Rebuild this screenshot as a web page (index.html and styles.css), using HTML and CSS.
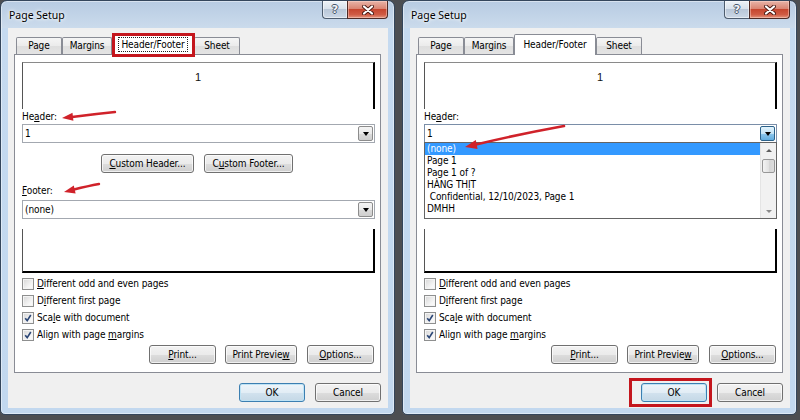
FILE: index.html
```html
<!DOCTYPE html>
<html>
<head>
<meta charset="utf-8">
<link rel="stylesheet" href="styles.css">
</head>
<body>
<div class="stage">
  <div class="dlg">
    <div class="titlebar">
      <span class="title">Page Setup</span>
      <div class="caps">
        <span class="cap help">?</span>
        <span class="cap close"><svg width="12" height="10" viewBox="0 0 12 10"><path d="M2 1.5L10 8.5M10 1.5L2 8.5" stroke="#4a1a14" stroke-width="4" stroke-linecap="round"/><path d="M2 1.5L10 8.5M10 1.5L2 8.5" stroke="#fff" stroke-width="2.2" stroke-linecap="round"/></svg></span>
      </div>
    </div>
    <div class="client">
      <div class="tabs">
        <span class="tab w-page">Page</span>
        <span class="tab w-margins">Margins</span>
        <span class="tab sel"><span class="focus">Header/Footer</span></span>
        <span class="tab w-sheet">Sheet</span>
      </div>
      <div class="panel">
        <div class="preview top">1</div>
        <div class="lbl lbl-h">He<u>a</u>der:</div>
        <div class="combo"><span class="val">1</span><span class="drop"><i class="tri"></i></span></div>
        <div class="btnrow center">
          <button class="btn w-ch"><u>C</u>ustom Header...</button>
          <button class="btn w-cf">C<u>u</u>stom Footer...</button>
        </div>
        <div class="lbl lbl-f"><u>F</u>ooter:</div>
        <div class="combo"><span class="val">(none)</span><span class="drop"><i class="tri"></i></span></div>
        <div class="preview bottom"></div>
        <div class="checks">
          <div class="chk"><span class="box"></span><span><u>D</u>ifferent odd and even pages</span></div>
          <div class="chk"><span class="box"></span><span>D<u>i</u>fferent first page</span></div>
          <div class="chk"><span class="box"><svg width="8" height="8" viewBox="0 0 8 8"><path d="M1.2 4.2L3.2 6.6L6.8 1" fill="none" stroke="#2b4676" stroke-width="1.6"/></svg></span><span>Sca<u>l</u>e with document</span></div>
          <div class="chk"><span class="box"><svg width="8" height="8" viewBox="0 0 8 8"><path d="M1.2 4.2L3.2 6.6L6.8 1" fill="none" stroke="#2b4676" stroke-width="1.6"/></svg></span><span>Align with page <u>m</u>argins</span></div>
        </div>
        <div class="btnrow end">
          <button class="btn w-pr"><u>P</u>rint...</button>
          <button class="btn w-pp">Print Previe<u>w</u></button>
          <button class="btn w-op"><u>O</u>ptions...</button>
        </div>
      </div>
      <div class="foot">
        <button class="btn w-ok def">OK</button>
        <button class="btn w-ok">Cancel</button>
      </div>
    </div>
  </div>

  <div class="dlg">
    <div class="titlebar">
      <span class="title">Page Setup</span>
      <div class="caps">
        <span class="cap help">?</span>
        <span class="cap close"><svg width="12" height="10" viewBox="0 0 12 10"><path d="M2 1.5L10 8.5M10 1.5L2 8.5" stroke="#4a1a14" stroke-width="4" stroke-linecap="round"/><path d="M2 1.5L10 8.5M10 1.5L2 8.5" stroke="#fff" stroke-width="2.2" stroke-linecap="round"/></svg></span>
      </div>
    </div>
    <div class="client">
      <div class="tabs">
        <span class="tab w-page">Page</span>
        <span class="tab w-margins">Margins</span>
        <span class="tab sel"><span class="nofocus">Header/Footer</span></span>
        <span class="tab w-sheet">Sheet</span>
      </div>
      <div class="panel">
        <div class="preview top">1</div>
        <div class="lbl lbl-h">He<u>a</u>der:</div>
        <div class="combo open"><span class="val">1</span><span class="drop hot"><i class="tri"></i></span>
          <div class="list">
            <div class="items">
              <div class="item sel">(none)</div>
              <div class="item">Page 1</div>
              <div class="item">Page 1 of ?</div>
              <div class="item">HÀNG THỊT</div>
              <div class="item"> Confidential, 12/10/2023, Page 1</div>
              <div class="item">DMHH</div>
            </div>
            <div class="sb">
              <span class="sb-btn"><i class="tri-up"></i></span>
              <span class="thumb"></span>
              <span class="sb-fill"></span>
              <span class="sb-btn"><i class="tri-dn"></i></span>
            </div>
          </div>
        </div>
        <div class="btnrow center covered">
          <button class="btn w-ch"><u>C</u>ustom Header...</button>
          <button class="btn w-cf">C<u>u</u>stom Footer...</button>
        </div>
        <div class="lbl lbl-f covered"><u>F</u>ooter:</div>
        <div class="combo covered"><span class="val">(none)</span><span class="drop"><i class="tri"></i></span></div>
        <div class="preview bottom"></div>
        <div class="checks">
          <div class="chk"><span class="box"></span><span><u>D</u>ifferent odd and even pages</span></div>
          <div class="chk"><span class="box"></span><span>D<u>i</u>fferent first page</span></div>
          <div class="chk"><span class="box"><svg width="8" height="8" viewBox="0 0 8 8"><path d="M1.2 4.2L3.2 6.6L6.8 1" fill="none" stroke="#2b4676" stroke-width="1.6"/></svg></span><span>Sca<u>l</u>e with document</span></div>
          <div class="chk"><span class="box"><svg width="8" height="8" viewBox="0 0 8 8"><path d="M1.2 4.2L3.2 6.6L6.8 1" fill="none" stroke="#2b4676" stroke-width="1.6"/></svg></span><span>Align with page <u>m</u>argins</span></div>
        </div>
        <div class="btnrow end">
          <button class="btn w-pr"><u>P</u>rint...</button>
          <button class="btn w-pp">Print Previe<u>w</u></button>
          <button class="btn w-op"><u>O</u>ptions...</button>
        </div>
      </div>
      <div class="foot">
        <button class="btn w-ok def">OK</button>
        <button class="btn w-ok">Cancel</button>
      </div>
    </div>
  </div>

  <svg class="marks" width="800" height="420" viewBox="0 0 800 420">
    <rect x="113.5" y="34.5" width="80" height="21" fill="none" stroke="#c4161d" stroke-width="3"/>
    <rect x="630.5" y="379.5" width="80" height="26" fill="none" stroke="#c4161d" stroke-width="3"/>
    <path d="M115 112 Q95 114 72 117" fill="none" stroke="#d0222a" stroke-width="2.4" stroke-linecap="round"/>
    <polygon points="62,118 73.4,120.8 72.5,112.8" fill="#d0222a"/>
    <path d="M99 184 Q88 186 74 189.5" fill="none" stroke="#d0222a" stroke-width="2.4" stroke-linecap="round"/>
    <polygon points="64,192 75.6,193.4 73.8,185.6" fill="#d0222a"/>
    <path d="M564 126 Q520 134 476 144.5" fill="none" stroke="#d0222a" stroke-width="2.6" stroke-linecap="round"/>
    <polygon points="465,147 477.6,148.9 475.8,140.1" fill="#d0222a"/>
  </svg>
</div>
</body>
</html>
```

FILE: styles.css
```css
html, body {
  margin: 0;
  padding: 0;
}
body {
  width: 800px;
  height: 420px;
  overflow: hidden;
  background: #4c4e52;
  font-family: "DejaVu Sans Condensed", "Liberation Sans", sans-serif;
  font-size: 10px;
  letter-spacing: -0.1px;
  color: #000;
}
.stage {
  position: relative;
  display: flex;
  gap: 7px;
  width: 800px;
  height: 420px;
}
.dlg {
  flex: none;
  width: 395px;
  height: 415px;
  box-sizing: border-box;
  border: 1px solid #34465c;
  border-radius: 7px 7px 5px 5px;
  padding: 0 6px 6px 7px;
  background: linear-gradient(180deg, #b7cbe2 0, #cbdbec 27px, #c5daf0 27px, #c2d8ef 100%);
  box-shadow: inset 0 0 0 1px rgba(255, 255, 255, 0.45);
  display: flex;
  flex-direction: column;
}
.titlebar {
  flex: none;
  height: 27px;
  display: flex;
  justify-content: space-between;
  align-items: flex-start;
}
.title {
  font-family: "Noto Sans", sans-serif;
  font-size: 10.5px;
  letter-spacing: 0;
  line-height: 14px;
  padding: 7px 0 0 1px;
  color: #000;
  text-shadow: 0 0 5px #fff, 0 0 3px #fff;
}
.caps {
  display: flex;
}
.cap {
  height: 18px;
  box-sizing: border-box;
  display: flex;
  align-items: center;
  justify-content: center;
}
.help {
  width: 25px;
  border: 1px solid #4d5c6e;
  border-top: 0;
  border-right: 0;
  border-radius: 0 0 0 4px;
  background: linear-gradient(180deg, #edf2f7 0%, #d9e2ec 45%, #b9c7d8 50%, #ccd8e6 100%);
  box-shadow: inset 0 0 0 1px rgba(255, 255, 255, 0.5);
  color: #f4f6f8;
  font: bold 11px "DejaVu Sans", sans-serif;
  text-shadow: 1px 0 0 #46556a, -1px 0 0 #46556a, 0 1px 0 #46556a, 0 -1px 0 #46556a;
}
.close {
  width: 41px;
  border: 1px solid #4e2a25;
  border-top: 0;
  border-radius: 0 0 4px 0;
  background: linear-gradient(180deg, #e8b4a8 0%, #da8573 45%, #c6462f 50%, #d05c45 80%, #e3947e 100%);
  box-shadow: inset 0 0 0 1px rgba(255, 220, 210, 0.45);
}
.client {
  flex: none;
  width: 380px;
  height: 380px;
  box-sizing: border-box;
  background: #f0f0f0;
  display: flex;
  flex-direction: column;
}
.tabs {
  flex: none;
  height: 26px;
  display: flex;
  align-items: flex-end;
  padding-left: 8px;
}
.tab {
  box-sizing: border-box;
  height: 17px;
  border: 1px solid #898c95;
  border-bottom: 0;
  border-radius: 2px 2px 0 0;
  background: linear-gradient(180deg, #f5f5f5 0%, #ebebeb 50%, #dedede 51%, #e4e4e4 100%);
  text-align: center;
  line-height: 16px;
  white-space: nowrap;
}
.w-page { width: 46px; }
.w-margins { width: 50px; }
.w-sheet { width: 46px; }
.tab.sel {
  width: 82px;
  height: 21px;
  margin-bottom: -1px;
  background: #fff;
  position: relative;
  z-index: 1;
  line-height: 19px;
}
.focus {
  display: inline-block;
  line-height: 13px;
  padding: 0 2px;
  outline: 1px dotted #222;
}
.nofocus {
  display: inline-block;
  line-height: 13px;
  padding: 0 2px;
}
.panel {
  flex: none;
  margin-left: 6px;
  width: 367px;
  height: 319px;
  box-sizing: border-box;
  border: 1px solid #898c95;
  background: #fff;
  padding: 7px 5px 0 7px;
  display: flex;
  flex-direction: column;
}
.covered {
  visibility: hidden;
}
.preview {
  flex: none;
  box-sizing: border-box;
}
.preview.top {
  height: 47px;
  border-top: 1px solid #8a8a8a;
  border-left: 1px solid #555;
  border-right: 2px solid #000;
  text-align: center;
  padding-top: 8px;
  font-family: "Liberation Sans", sans-serif;
  font-size: 11px;
  line-height: 12px;
  color: #111;
}
.preview.bottom {
  height: 44px;
  margin-top: 10px;
  border-left: 1px solid #555;
  border-right: 2px solid #000;
  border-bottom: 2px solid #000;
}
.lbl {
  flex: none;
  box-sizing: border-box;
  line-height: 12px;
}
.lbl-h {
  height: 15px;
  padding-top: 2px;
}
.lbl-f {
  height: 27px;
  padding-top: 12px;
}
.combo {
  flex: none;
  height: 19px;
  box-sizing: border-box;
  border: 1px solid #a3a8b0;
  background: #fff;
  display: flex;
  align-items: center;
}
.combo.open {
  position: relative;
  border-color: #7a8ea8;
  z-index: 3;
}
.val {
  flex: 1;
  padding-left: 2px;
  line-height: 12px;
}
.drop {
  width: 15px;
  height: 15px;
  box-sizing: border-box;
  margin-right: 1px;
  border: 1px solid #8c8c8c;
  border-radius: 2px;
  background: linear-gradient(180deg, #f4f4f4 0%, #eaeaea 50%, #dadada 51%, #cfcfcf 100%);
  display: flex;
  align-items: center;
  justify-content: center;
}
.drop.hot {
  border-color: #2c628b;
  background: linear-gradient(180deg, #e3f3fc 0%, #c3e3f6 50%, #8ec7ec 51%, #62ade0 100%);
}
.tri {
  width: 0;
  height: 0;
  border-left: 3.5px solid transparent;
  border-right: 3.5px solid transparent;
  border-top: 4px solid #000;
}
.list {
  position: absolute;
  left: -1px;
  right: -1px;
  top: 17px;
  height: 77px;
  box-sizing: border-box;
  border: 1px solid #646464;
  background: #fff;
  display: flex;
}
.items {
  flex: 1;
  display: flex;
  flex-direction: column;
}
.item {
  height: 12px;
  line-height: 12px;
  padding-left: 2px;
  white-space: pre;
}
.item.sel {
  background: #3399ff;
  color: #fff;
}
.sb {
  width: 15px;
  background: #f1f1f1;
  border-left: 1px solid #e4e4e4;
  display: flex;
  flex-direction: column;
  align-items: center;
}
.sb-btn {
  height: 14px;
  width: 15px;
  display: flex;
  align-items: center;
  justify-content: center;
}
.tri-up {
  width: 0;
  height: 0;
  border-left: 3px solid transparent;
  border-right: 3px solid transparent;
  border-bottom: 3px solid #5e5e5e;
}
.tri-dn {
  width: 0;
  height: 0;
  border-left: 3px solid transparent;
  border-right: 3px solid transparent;
  border-top: 3px solid #8a8a8a;
}
.thumb {
  width: 13px;
  height: 14px;
  margin-top: 2px;
  box-sizing: border-box;
  border: 1px solid #979797;
  border-radius: 2px;
  background: linear-gradient(90deg, #f3f3f3, #e2e2e2 50%, #d4d4d4 51%, #dedede);
}
.sb-fill {
  flex: 1;
}
.btnrow {
  flex: none;
  height: 19px;
  display: flex;
}
.btnrow.center {
  margin-top: 11px;
  justify-content: center;
  gap: 10px;
  padding-right: 3px;
}
.btnrow.end {
  margin-top: 2px;
  justify-content: flex-end;
  padding-right: 1px;
}
.btn {
  font: inherit;
  font-size: 10px;
  letter-spacing: -0.1px;
  height: 19px;
  box-sizing: border-box;
  border: 1px solid #707070;
  border-radius: 3px;
  background: linear-gradient(180deg, #f2f2f2 0%, #ebebeb 50%, #dddddd 51%, #cfcfcf 100%);
  box-shadow: inset 0 0 0 1px rgba(255, 255, 255, 0.7);
  padding: 0;
  color: #000;
  line-height: 15px;
  white-space: nowrap;
}
.w-ch { width: 93px; }
.w-cf { width: 89px; }
.w-pr { width: 67px; }
.w-pp { width: 72px; margin-left: 9px; }
.w-op { width: 67px; margin-left: 10px; }
.w-ok { width: 66px; }
.btn.def {
  border-color: #3c7fb1;
  background: linear-gradient(180deg, #eef5fa 0%, #e2edf5 50%, #d2e2ee 51%, #c4d8e6 100%);
  box-shadow: inset 0 0 0 1px #bfe3f5;
}
.checks {
  flex: none;
  margin-top: 2px;
  display: flex;
  flex-direction: column;
}
.chk {
  height: 17px;
  display: flex;
  align-items: center;
  gap: 3px;
  line-height: 12px;
}
.box {
  width: 12px;
  height: 12px;
  box-sizing: border-box;
  border: 1px solid #8e8f8f;
  background: linear-gradient(135deg, #d6d6d6, #f6f6f6 70%, #fcfcfc);
  box-shadow: inset 0 0 0 1px #f4f4f4;
  display: flex;
  align-items: center;
  justify-content: center;
}
.foot {
  flex: none;
  display: flex;
  justify-content: flex-end;
  gap: 10px;
  margin-top: 10px;
  padding-right: 7px;
  height: 19px;
}
.marks {
  position: absolute;
  left: 0;
  top: 0;
  pointer-events: none;
  z-index: 10;
}
```
